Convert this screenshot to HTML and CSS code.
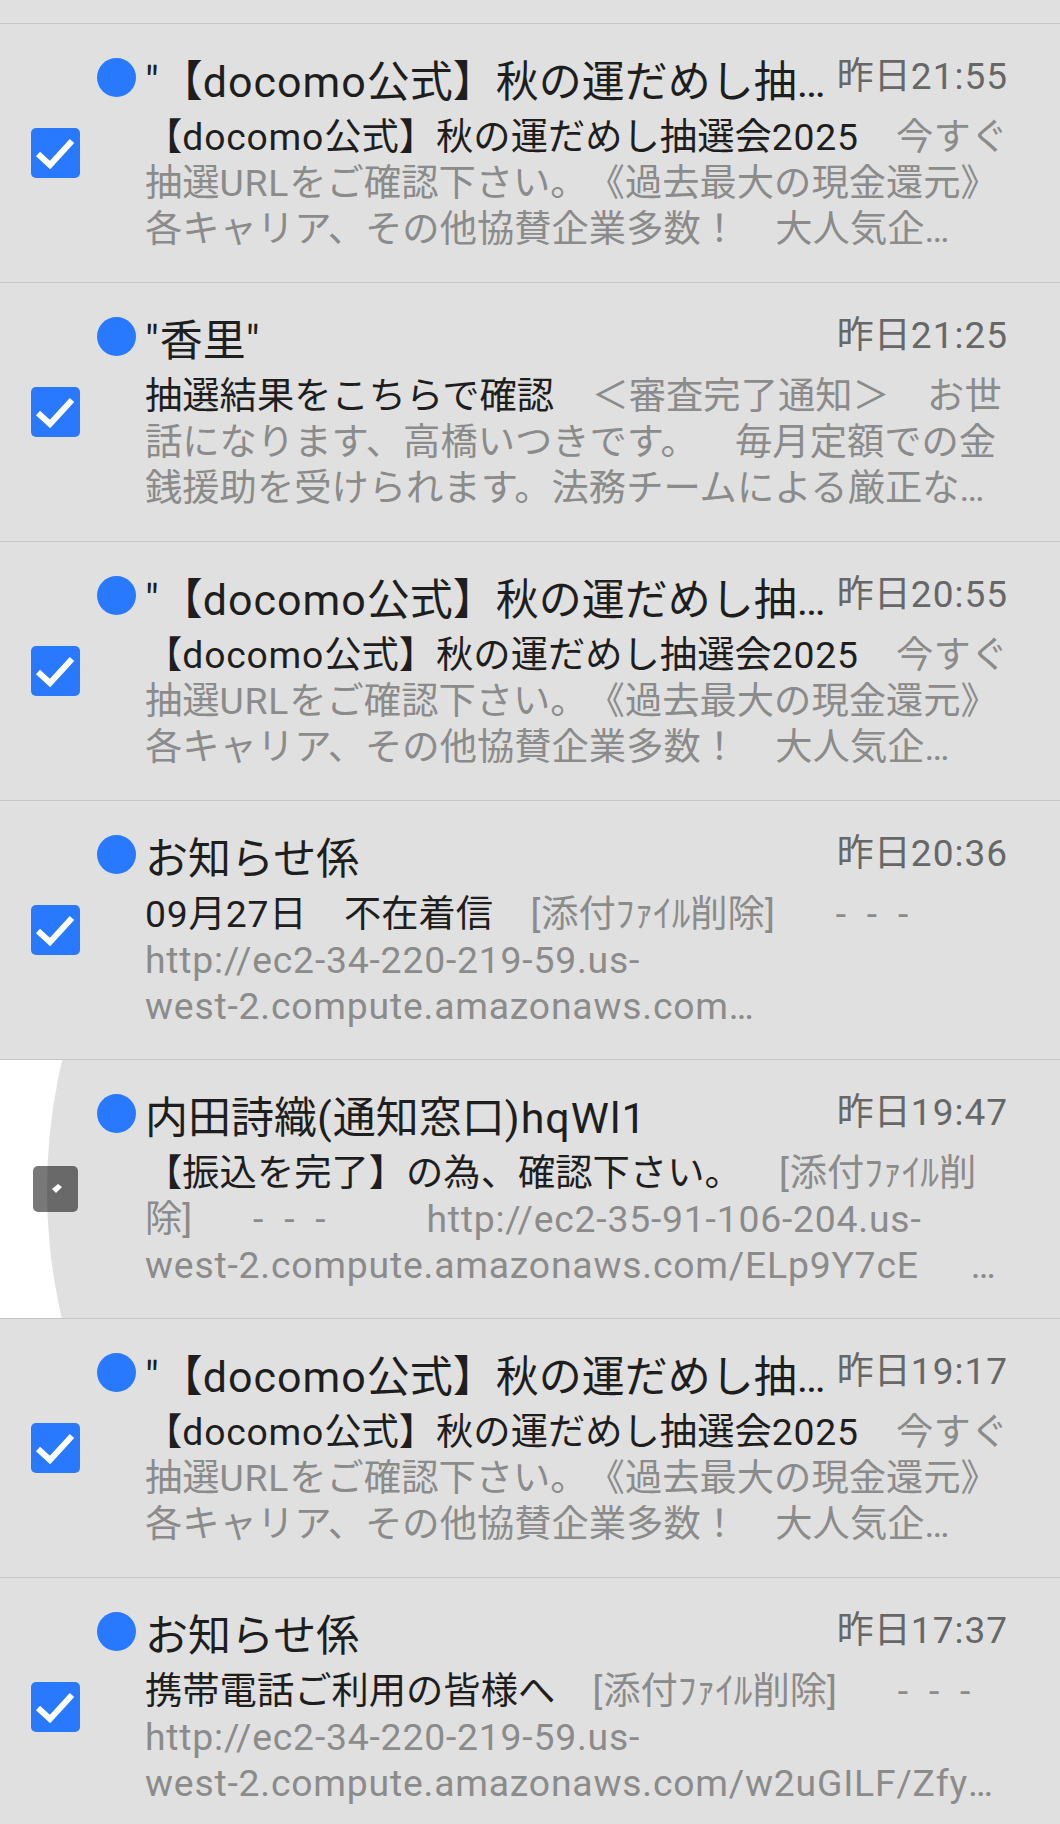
FILE: index.html
```html
<!DOCTYPE html>
<html lang="ja">
<head>
    <meta charset="UTF-8">
    <meta name="viewport" content="width=device-width, initial-scale=1.0">
    <title>受信ボックス</title>
    <link rel="stylesheet" href="styles.css">
</head>
<body>
    <div class="mail-list">

        <div class="mail">
            <div class="mail-check">
                <span class="checkbox">
                    <svg width="49" height="50" viewBox="0 0 49 50"><polyline points="7,26 19,37 41,13" /></svg>
                </span>
            </div>
            <div class="mail-body">
                <div class="mail-head">
                    <span class="unread-dot"></span>
                    <span class="sender"><span class="en">"</span>【<span class="en">docomo</span>公式】秋の運だめし抽選会<span class="en">2025"</span></span>
                    <span class="date">昨日<span class="en">21:55</span></span>
                </div>
                <p class="preview"><span class="subject">【<span class="en">docomo</span>公式】秋の運だめし抽選会<span class="en">2025</span></span>　今すぐ<br>抽選<span class="en">URL</span>をご確認下さい。《過去最大の現金還元》<br>各キャリア、その他協賛企業多数！　大人気企…</p>
            </div>
        </div>

        <div class="mail">
            <div class="mail-check">
                <span class="checkbox">
                    <svg width="49" height="50" viewBox="0 0 49 50"><polyline points="7,26 19,37 41,13" /></svg>
                </span>
            </div>
            <div class="mail-body">
                <div class="mail-head">
                    <span class="unread-dot"></span>
                    <span class="sender"><span class="en">"</span>香里<span class="en">"</span></span>
                    <span class="date">昨日<span class="en">21:25</span></span>
                </div>
                <p class="preview"><span class="subject">抽選結果をこちらで確認</span>　＜審査完了通知＞　お世<br>話になります、高橋いつきです。　毎月定額での金<br>銭援助を受けられます。法務チームによる厳正な…</p>
            </div>
        </div>

        <div class="mail">
            <div class="mail-check">
                <span class="checkbox">
                    <svg width="49" height="50" viewBox="0 0 49 50"><polyline points="7,26 19,37 41,13" /></svg>
                </span>
            </div>
            <div class="mail-body">
                <div class="mail-head">
                    <span class="unread-dot"></span>
                    <span class="sender"><span class="en">"</span>【<span class="en">docomo</span>公式】秋の運だめし抽選会<span class="en">2025"</span></span>
                    <span class="date">昨日<span class="en">20:55</span></span>
                </div>
                <p class="preview"><span class="subject">【<span class="en">docomo</span>公式】秋の運だめし抽選会<span class="en">2025</span></span>　今すぐ<br>抽選<span class="en">URL</span>をご確認下さい。《過去最大の現金還元》<br>各キャリア、その他協賛企業多数！　大人気企…</p>
            </div>
        </div>

        <div class="mail">
            <div class="mail-check">
                <span class="checkbox">
                    <svg width="49" height="50" viewBox="0 0 49 50"><polyline points="7,26 19,37 41,13" /></svg>
                </span>
            </div>
            <div class="mail-body">
                <div class="mail-head">
                    <span class="unread-dot"></span>
                    <span class="sender">お知らせ係</span>
                    <span class="date">昨日<span class="en">20:36</span></span>
                </div>
                <p class="preview"><span class="subject"><span class="en">09</span>月<span class="en">27</span>日　不在着信</span>　<span class="en">[</span>添付ﾌｧｲﾙ削除<span class="en">]</span><span class="en dashes">- - -</span><br><span class="en">http://ec2-34-220-219-59.us-</span><br><span class="en">west-2.compute.amazonaws.com</span>…</p>
            </div>
        </div>

        <!-- 押下中の行（リップル表示） -->
        <div class="mail pressed">
            <span class="ripple"></span>
            <div class="mail-check">
                <span class="checkbox checkbox-off">
                    <svg width="45" height="46" viewBox="0 0 45 46"><polygon points="19,23 25,18 29,21 23,27" /></svg>
                </span>
            </div>
            <div class="mail-body">
                <div class="mail-head">
                    <span class="unread-dot"></span>
                    <span class="sender">内田詩織<span class="en">(</span>通知窓口<span class="en">)hqWl1</span></span>
                    <span class="date">昨日<span class="en">19:47</span></span>
                </div>
                <p class="preview"><span class="subject">【振込を完了】の為、確認下さい。</span>　<span class="en">[</span>添付ﾌｧｲﾙ削<br>除<span class="en">]</span><span class="en dashes">- - -</span><span class="en url-gap">http://ec2-35-91-106-204.us-</span><br><span class="en">west-2.compute.amazonaws.com/ELp9Y7cE</span><span class="tail-gap">…</span></p>
            </div>
        </div>

        <div class="mail">
            <div class="mail-check">
                <span class="checkbox">
                    <svg width="49" height="50" viewBox="0 0 49 50"><polyline points="7,26 19,37 41,13" /></svg>
                </span>
            </div>
            <div class="mail-body">
                <div class="mail-head">
                    <span class="unread-dot"></span>
                    <span class="sender"><span class="en">"</span>【<span class="en">docomo</span>公式】秋の運だめし抽選会<span class="en">2025"</span></span>
                    <span class="date">昨日<span class="en">19:17</span></span>
                </div>
                <p class="preview"><span class="subject">【<span class="en">docomo</span>公式】秋の運だめし抽選会<span class="en">2025</span></span>　今すぐ<br>抽選<span class="en">URL</span>をご確認下さい。《過去最大の現金還元》<br>各キャリア、その他協賛企業多数！　大人気企…</p>
            </div>
        </div>

        <div class="mail">
            <div class="mail-check">
                <span class="checkbox">
                    <svg width="49" height="50" viewBox="0 0 49 50"><polyline points="7,26 19,37 41,13" /></svg>
                </span>
            </div>
            <div class="mail-body">
                <div class="mail-head">
                    <span class="unread-dot"></span>
                    <span class="sender">お知らせ係</span>
                    <span class="date">昨日<span class="en">17:37</span></span>
                </div>
                <p class="preview"><span class="subject">携帯電話ご利用の皆様へ</span>　<span class="en">[</span>添付ﾌｧｲﾙ削除<span class="en">]</span><span class="en dashes">- - -</span><br><span class="en">http://ec2-34-220-219-59.us-</span><br><span class="en">west-2.compute.amazonaws.com/w2uGILF/Zfy</span>…</p>
            </div>
        </div>

    </div>
</body>
</html>
```

FILE: styles.css
```css
body {
    margin: 0;
    background: #e0e0e0;
    font-family: Roboto, "Noto Sans CJK JP", sans-serif;
    text-spacing-trim: space-all;
    overflow: hidden;
}

.mail-list {
    padding-top: 23px;
}

.mail {
    position: relative;
    display: flex;
    height: 258px;
    border-top: 1px solid #c6c6c6;
    overflow: hidden;
}

.mail.pressed {
    background: #fff;
}

/* 押下時のリップル */
.ripple {
    position: absolute;
    left: 47px;
    top: -433px;
    width: 1126px;
    height: 1126px;
    border-radius: 50%;
    background: #e0e0e0;
}

.mail-check {
    position: relative;
    flex: none;
    width: 97px;
    padding-left: 31px;
    box-sizing: border-box;
    align-self: center;
}

.checkbox {
    display: block;
    width: 49px;
    height: 50px;
    border-radius: 5px;
    background: #2979ff;
}

.checkbox svg {
    display: block;
}

.checkbox polyline {
    fill: none;
    stroke: #fff;
    stroke-width: 6;
}

.checkbox-off {
    width: 45px;
    height: 46px;
    margin-left: 2px;
    background: rgba(0, 0, 0, 0.53);
}

.checkbox-off polygon {
    fill: #fff;
}

.mail-body {
    position: relative;
    flex: 1;
    min-width: 0;
    padding: 30px 52px 0 0;
}

.mail-head {
    display: flex;
    align-items: flex-start;
}

.unread-dot {
    flex: none;
    width: 39px;
    height: 39px;
    margin: 4px 9px 0 0;
    border-radius: 50%;
    background: #2979ff;
}

.sender {
    flex: 1;
    min-width: 0;
    font-size: 43px;
    line-height: 56px;
    color: #1e1e1e;
    white-space: nowrap;
    overflow: hidden;
    text-overflow: ellipsis;
}

.sender .en {
    letter-spacing: 1px;
}

.date {
    flex: none;
    margin-left: 2px;
    font-size: 37px;
    line-height: 46px;
    color: #676767;
}

.date .en {
    letter-spacing: 1px;
}

.preview {
    margin: 4px 0 0 48px;
    font-size: 37.3px;
    line-height: 46px;
    color: #8b8b8b;
    white-space: nowrap;
    overflow: hidden;
}

.subject {
    color: #1e1e1e;
}

/* 英数字は端末表示に合わせて少し字間を空ける */
.preview .en {
    letter-spacing: 0.8px;
}

.dashes {
    margin-left: 60px;
    word-spacing: 10px;
}

.url-gap {
    margin-left: 100px;
}

.tail-gap {
    margin-left: 52px;
}
```
